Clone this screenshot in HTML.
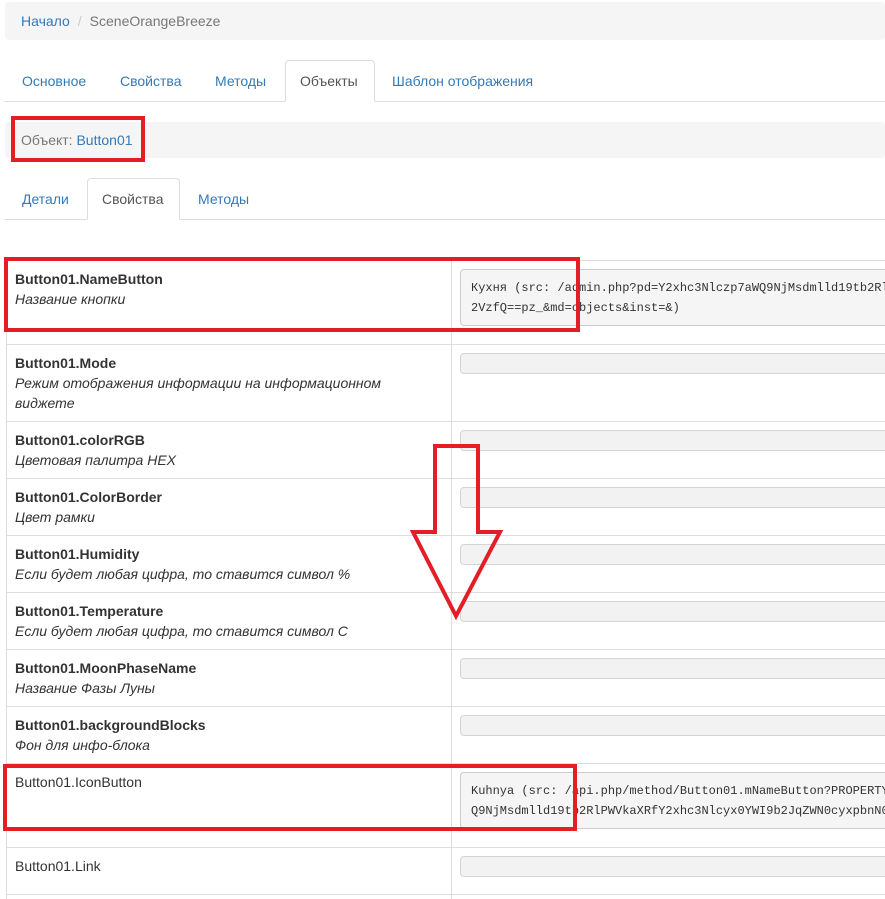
<!DOCTYPE html>
<html><head><meta charset="utf-8"><style>
*{box-sizing:border-box;margin:0;padding:0}
body{width:885px;height:899px;overflow:hidden;background:#fff;font-family:"Liberation Sans",Arial,sans-serif;font-size:14px;color:#333;position:relative}
.a{position:absolute}
.lnk{color:#337ab7}
.bc{left:5px;top:2px;width:880px;height:38px;background:#f5f5f5;border-radius:4px}
.hl{height:1px;background:#ddd}
.tab{position:absolute;font-size:14px;color:#337ab7}
.act{border:1px solid #ddd;border-bottom-color:#fff;border-radius:4px 4px 0 0;background:#fff;color:#555}
.b{font-weight:bold;color:#333}
.i{font-style:italic;color:#333}
.inp{position:absolute;left:460px;width:440px;height:21px;background:#f2f2f2;border:1px solid #d4d4d4;border-radius:4px}
.pre{position:absolute;left:460px;width:440px;background:#f5f5f5;border:1px solid #ccc;border-radius:4px;font-family:"Liberation Mono",monospace;font-size:12px;line-height:20px;padding:8px 10px;color:#333;white-space:pre;overflow:hidden}
.rb{position:absolute;border:4px solid #e41e26}
</style></head><body>
<div class="a bc"></div>
<div class="a" style="left:21px;top:13px"><span class="lnk">Начало</span><span style="color:#ccc;padding:0 8px">/</span><span style="color:#777">SceneOrangeBreeze</span></div>

<div class="a hl" style="left:5px;top:101px;width:880px"></div>
<div class="tab act" style="left:285px;top:60px;width:90px;height:42px"></div>
<div class="tab" style="left:22px;top:73px">Основное</div>
<div class="tab" style="left:120px;top:73px">Свойства</div>
<div class="tab" style="left:215px;top:73px">Методы</div>
<div class="tab" style="left:300px;top:73px;color:#555">Объекты</div>
<div class="tab" style="left:392px;top:73px">Шаблон отображения</div>

<div class="a" style="left:5px;top:122px;width:880px;height:36px;background:#f5f5f5;border-radius:4px"></div>
<div class="a" style="left:21px;top:132px"><span style="color:#777">Объект:</span> <span class="lnk">Button01</span></div>
<div class="rb" style="left:11px;top:116px;width:134px;height:46px"></div>

<div class="a hl" style="left:5px;top:219px;width:880px"></div>
<div class="tab act" style="left:87px;top:178px;width:93px;height:42px"></div>
<div class="tab" style="left:22px;top:191px">Детали</div>
<div class="tab" style="left:102px;top:191px;color:#555">Свойства</div>
<div class="tab" style="left:198px;top:191px">Методы</div>

<div class="a" style="left:6px;top:260px;width:1px;height:639px;background:#ddd"></div>
<div class="a" style="left:451px;top:260px;width:1px;height:639px;background:#ddd"></div>
<div class="a hl" style="left:6px;top:260px;width:879px"></div>
<div class="a hl" style="left:6px;top:344px;width:879px"></div>
<div class="a hl" style="left:6px;top:421px;width:879px"></div>
<div class="a hl" style="left:6px;top:478px;width:879px"></div>
<div class="a hl" style="left:6px;top:535px;width:879px"></div>
<div class="a hl" style="left:6px;top:592px;width:879px"></div>
<div class="a hl" style="left:6px;top:649px;width:879px"></div>
<div class="a hl" style="left:6px;top:706px;width:879px"></div>
<div class="a hl" style="left:6px;top:763px;width:879px"></div>
<div class="a hl" style="left:6px;top:847px;width:879px"></div>
<div class="a hl" style="left:6px;top:894px;width:879px"></div>

<div class="a" style="left:15px;top:269px;line-height:20px"><div class="b">Button01.NameButton</div><div class="i">Название кнопки</div></div>
<div class="pre" style="top:269px;height:57px">Кухня (src: /admin.php?pd=Y2xhc3Nlczp7aWQ9NjMsdmlld19tb2Rl
2VzfQ==pz_&amp;md=objects&amp;inst=&amp;)</div>

<div class="a" style="left:15px;top:353px;line-height:20px;width:420px"><div class="b">Button01.Mode</div><div class="i">Режим отображения информации на информационном<br>виджете</div></div>
<div class="inp" style="top:353px"></div>

<div class="a" style="left:15px;top:430px;line-height:20px"><div class="b">Button01.colorRGB</div><div class="i">Цветовая палитра HEX</div></div>
<div class="inp" style="top:430px"></div>

<div class="a" style="left:15px;top:487px;line-height:20px"><div class="b">Button01.ColorBorder</div><div class="i">Цвет рамки</div></div>
<div class="inp" style="top:487px"></div>

<div class="a" style="left:15px;top:544px;line-height:20px"><div class="b">Button01.Humidity</div><div class="i">Если будет любая цифра, то ставится символ %</div></div>
<div class="inp" style="top:544px"></div>

<div class="a" style="left:15px;top:601px;line-height:20px"><div class="b">Button01.Temperature</div><div class="i">Если будет любая цифра, то ставится символ С</div></div>
<div class="inp" style="top:601px"></div>

<div class="a" style="left:15px;top:658px;line-height:20px"><div class="b">Button01.MoonPhaseName</div><div class="i">Название Фазы Луны</div></div>
<div class="inp" style="top:658px"></div>

<div class="a" style="left:15px;top:715px;line-height:20px"><div class="b">Button01.backgroundBlocks</div><div class="i">Фон для инфо-блока</div></div>
<div class="inp" style="top:715px"></div>

<div class="a" style="left:15px;top:772px;line-height:20px">Button01.IconButton</div>
<div class="pre" style="top:772px;height:57px">Kuhnya (src: /api.php/method/Button01.mNameButton?PROPERTY
Q9NjMsdmlld19tb2RlPWVkaXRfY2xhc3Nlcyx0YWI9b2JqZWN0cyxpbnN0</div>

<div class="a" style="left:15px;top:856px;line-height:20px">Button01.Link</div>
<div class="inp" style="top:856px"></div>

<div class="rb" style="left:4px;top:257px;width:576px;height:75px"></div>
<div class="rb" style="left:3px;top:764px;width:574px;height:67px"></div>

<svg class="a" style="left:0;top:0" width="885" height="899">
<path d="M435 446 L478 446 L478 532 L500 532 L456 616 L413 532 L435 532 Z" fill="none" stroke="#e41e26" stroke-width="4" stroke-linejoin="miter"/>
</svg>
</body></html>
